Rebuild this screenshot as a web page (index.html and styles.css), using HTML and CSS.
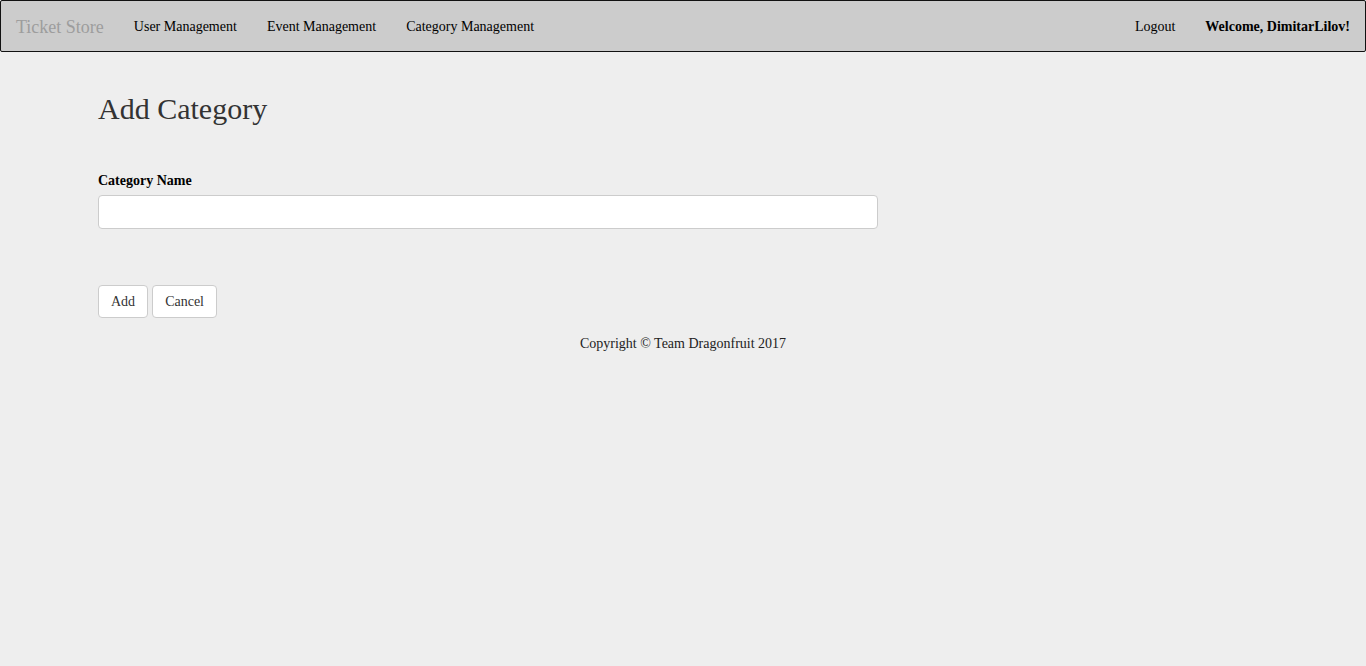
FILE: index.html
```html
<!DOCTYPE html>
<html>
<head>
<meta charset="utf-8">
<title>Add Category</title>
<link rel="stylesheet" href="styles.css">
</head>
<body>
<nav class="navbar">
  <a class="brand" href="#">Ticket Store</a>
  <ul class="nav">
    <li><a href="#">User Management</a></li>
    <li><a href="#">Event Management</a></li>
    <li><a href="#">Category Management</a></li>
  </ul>
  <ul class="nav nav-right">
    <li><a href="#">Logout</a></li>
    <li><span class="welcome">Welcome, DimitarLilov!</span></li>
  </ul>
</nav>
<main class="container">
  <h2 class="title">Add Category</h2>
  <form class="form">
    <label class="label" for="name">Category Name</label>
    <input class="input" id="name" type="text">
    <div class="actions">
      <button class="btn" type="button">Add</button>
      <button class="btn" type="button">Cancel</button>
    </div>
  </form>
  <footer class="footer">Copyright © Team Dragonfruit 2017</footer>
</main>
</body>
</html>
```
FILE: styles.css
```css
* { box-sizing: border-box; }
html, body { margin: 0; padding: 0; }
body {
  background: #eeeeee;
  font-family: "Liberation Serif", "Times New Roman", serif;
  font-size: 14px;
  line-height: 1.42857;
  color: #333;
}
.navbar {
  display: flex;
  align-items: center;
  height: 52px;
  padding-top: 1px;
  background: #cccccc;
  border: 1px solid #111;
  border-radius: 2px;
}
.brand {
  padding: 0 15px;
  font-size: 18px;
  line-height: 50px;
  color: #9d9d9d;
  text-decoration: none;
}
.nav {
  display: flex;
  list-style: none;
  margin: 0;
  padding: 0;
}
.nav a, .nav .welcome {
  display: block;
  padding: 0 15px;
  line-height: 50px;
  color: #000;
  text-decoration: none;
}
.nav .welcome { font-weight: bold; }
.nav-right { margin-left: auto; }
.container {
  width: 1170px;
  margin: 0 auto;
}
.title {
  margin: 40px 0 0;
  font-size: 30px;
  font-weight: normal;
  line-height: 1.1;
  color: #333;
}
.form {
  width: 780px;
  margin-top: 46px;
}
.label {
  display: block;
  font-weight: bold;
  color: #000;
  margin-bottom: 4px;
  line-height: 20px;
}
.input {
  display: block;
  width: 780px;
  height: 34px;
  padding: 6px 12px;
  background: #fff;
  border: 1px solid #ccc;
  border-radius: 4px;
  font: inherit;
}
.actions {
  display: flex;
  gap: 4px;
  margin-top: 56px;
}
.btn {
  height: 33px;
  padding: 5px 12px;
  background: #fff;
  border: 1px solid #ccc;
  border-radius: 4px;
  font-family: inherit;
  font-size: 14px;
  color: #333;
}
.footer {
  text-align: center;
  margin-top: 16px;
  color: #222;
}
```
